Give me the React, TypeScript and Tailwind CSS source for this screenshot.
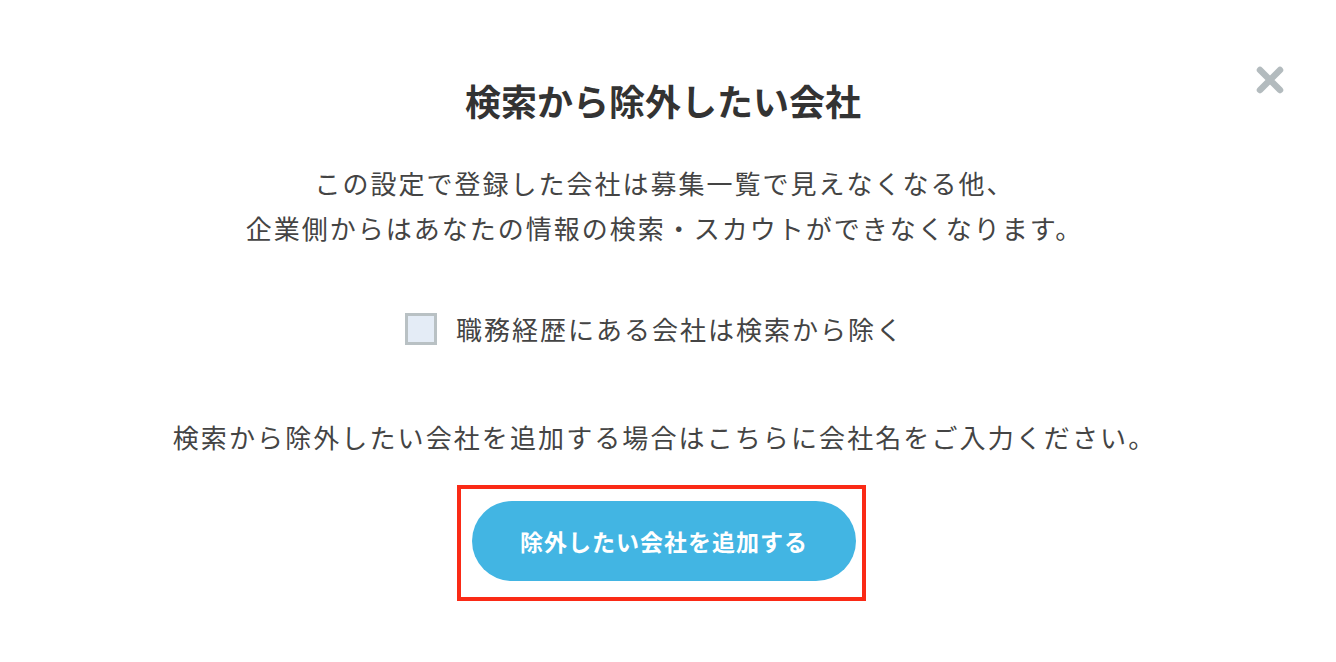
import React from "react";

const font = { fontFamily: '"Noto Sans CJK JP", "Noto Sans", sans-serif' };

export default function App() {
  return (
    <div className="relative w-full min-h-[662px] bg-white text-[#444]" style={font}>
      {/* 閉じるボタン */}
      <button className="absolute right-[52px] top-[66px] w-[28px] h-[28px]" aria-label="close">
        <svg viewBox="0 0 28 28" width="28" height="28">
          <path d="M4 4 L24 24 M24 4 L4 24" stroke="#b3bbbe" strokeWidth="6.5" strokeLinecap="round" />
        </svg>
      </button>

      <div className="flex flex-col items-center pt-[75px] pr-[13px]">
        <h1 className="text-[36px] leading-[50px] font-bold text-[#333] ml-[3px]">検索から除外したい会社</h1>

        <p className="mt-[35px] ml-[6px] text-center text-[26px] leading-[45px] tracking-[2px]">
          この設定で登録した会社は募集一覧で見えなくなる他、
          <br />
          企業側からはあなたの情報の検索・スカウトができなくなります。
        </p>

        <label className="mt-[63px] mr-[14px] flex items-center gap-[19px] h-[32px]">
          <span className="w-[32px] h-[32px] border-[3px] border-[#b9c1c4] bg-[#e4ecf6]" />
          <span className="text-[26px] leading-[32px] tracking-[2px]">職務経歴にある会社は検索から除く</span>
        </label>

        <p className="mt-[69px] ml-[6px] text-[26px] leading-[45px] tracking-[2.1px]">
          検索から除外したい会社を追加する場合はこちらに会社名をご入力ください。
        </p>

        <div className="mt-[26px] border-[4px] border-[#fa2a16] pl-[11px] pr-[6px] pt-[12px] pb-[16px]">
          <button className="w-[384px] h-[80px] rounded-full bg-[#42b5e3] text-white text-[23px] font-bold tracking-[1px]">
            除外したい会社を追加する
          </button>
        </div>
      </div>
    </div>
  );
}
